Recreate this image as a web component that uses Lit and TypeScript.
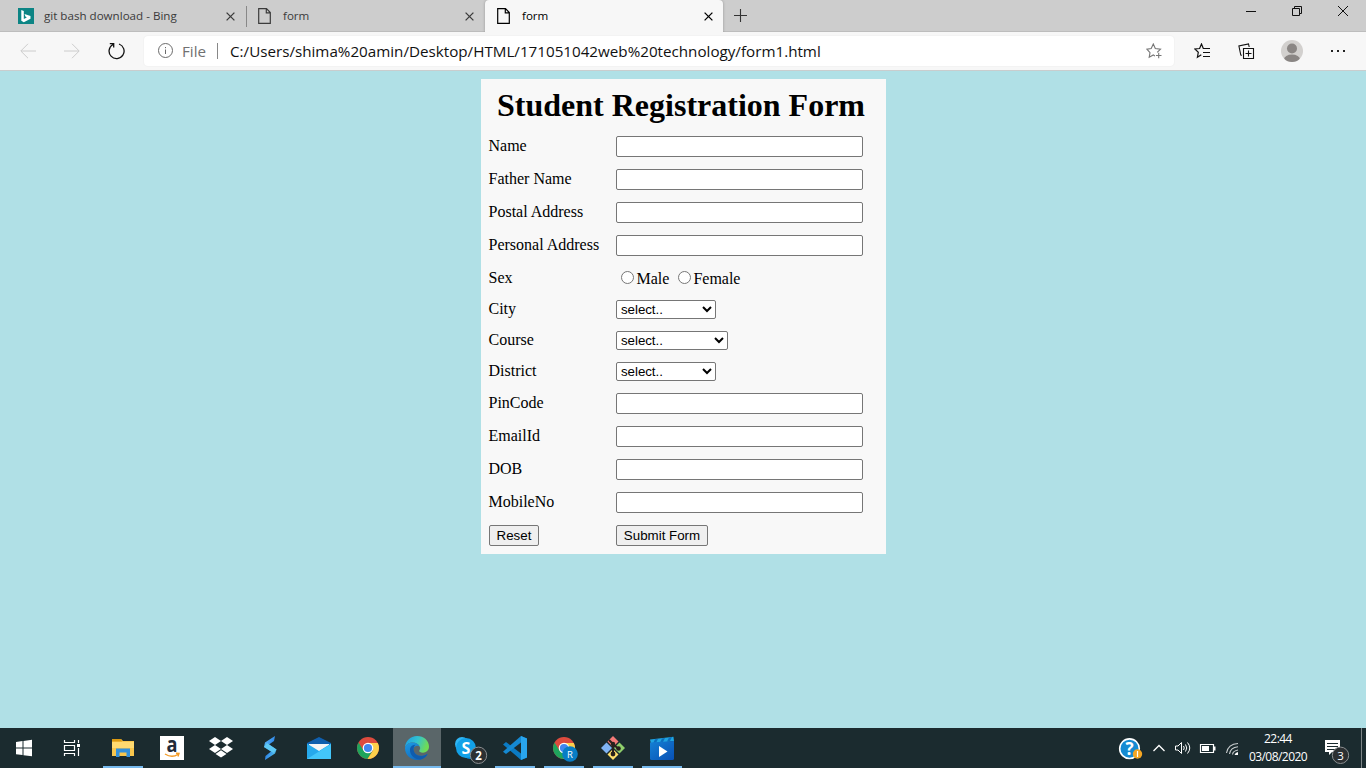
import { LitElement, html, svg, css } from "lit";
import { customElement, property } from "lit/decorators.js";

const closeIcon = html`<svg width="9" height="9" viewBox="0 0 9 9"><path d="M.6.6 8.4 8.4M8.4.6.6 8.4" stroke="currentColor" stroke-width="1.3" fill="none"/></svg>`;
const fileIcon = html`<svg width="14" height="16" viewBox="0 0 14 16"><path d="M.7.7H8.5L12.3 4.500V15.3H.7ZM8.3.8V4.800H12.3" stroke="currentColor" stroke-width="1.2" fill="none"/></svg>`;
const bingIcon = html`<svg width="16" height="16"><rect width="16" height="16" fill="#0c8484"/><path d="M3.300 2 5.800 2.900V11L8.800 9.400 7.400 8.600 6.500 5.900 12.500 8V10.700L5.800 14.200 3.300 12.800Z" fill="#fff"/></svg>`;

@customElement("browser-tabs")
class BrowserTabs extends LitElement {
  static styles = css`
    :host { display: flex; height: 32px; box-sizing: border-box; background: #cdcdcd; box-shadow: inset 0 -1px #bdbdbd; font: 11.6px "Open Sans", sans-serif; color: #3b3b3b; }
    .tab { display: flex; align-items: center; box-sizing: border-box; height: 32px; }
    .first { width: 246px; padding-left: 18px; padding-right: 11px; }
    .second { width: 238px; padding: 0 11px; }
    .active { width: 238px; padding: 0 10px 0 12px; background: #f7f7f7; border-radius: 4px 4px 0 0; color: #000; box-shadow: 0 0 3px #0004; clip-path: inset(0 -4px 0 -4px); }
    .title { flex: 1; padding: 0 0 2px 11px; white-space: pre; }
    .first .title { padding-left: 10px; }
    .sep { width: 1px; height: 21px; background: #888; margin-top: 6px; }
    .plus { margin: 9px 0 0 11px; color: #333; }
    .controls { margin-left: auto; display: flex; gap: 36px; padding: 6px 18px 0 0; color: #111; }
    svg { display: block; flex: none; }
  `;
  render() {
    return html`
      <div class="tab first">${bingIcon}<span class="title">git bash download - Bing</span>${closeIcon}</div>
      <div class="sep"></div>
      <div class="tab second">${fileIcon}<span class="title">form</span>${closeIcon}</div>
      <div class="tab active">${fileIcon}<span class="title">form</span>${closeIcon}</div>
      <svg class="plus" width="13" height="13"><path d="M0 6.500H13M6.500 0V13" stroke="currentColor" stroke-width="1.100"/></svg>
      <div class="controls">
        <svg width="10" height="11"><path d="M0 5.500H10" stroke="currentColor"/></svg>
        <svg width="10" height="10"><path d="M.5 2.500H7.500V9.500H.5ZM2.500 2.500V.5H9.500V7.500H7.500" stroke="currentColor" fill="none"/></svg>
        <svg width="10" height="10"><path d="M0 0 10 10M10 0 0 10" stroke="currentColor"/></svg>
      </div>`;
  }
}

@customElement("address-bar")
class AddressBar extends LitElement {
  static styles = css`
    :host { display: flex; align-items: center; box-sizing: border-box; height: 39px; background: #f7f7f7; border-bottom: 1px solid #c9cdce; padding-left: 20px; font: 15.2px "Open Sans", sans-serif; }
    svg { display: block; flex: none; }
    .nav { display: flex; gap: 28px; align-items: center; width: 124px; color: #ccc; }
    .box { display: flex; align-items: center; box-sizing: border-box; width: 1030px; height: 30px; background: #fff; border-radius: 4px; padding: 0 12px 0 14px; box-shadow: 0 0 2px #0001; }
    .file { color: #717171; width: 35px; padding-left: 8px; white-space: pre; }
    .line { width: 1px; height: 16px; background: #888; margin-right: 12px; }
    .url { flex: 1; color: #111; white-space: pre; }
    .tools { display: flex; align-items: center; padding-left: 20px; color: #111; }
    .tools svg + svg { margin-left: 26.5px; }
  `;
  render() {
    return html`
      <div class="nav">
        <svg width="16" height="16"><path d="M16 8H1M8 .8.8 8 8 15.200" stroke="currentColor" fill="none"/></svg>
        <svg width="16" height="16"><path d="M0 8H15M8 .8 15.200 8 8 15.200" stroke="currentColor" fill="none"/></svg>
        <svg width="18" height="18"><path d="M11 2A7.500 7.500 0 1 1 5 2.500M1.800 1.600H5.700V5.500" stroke="#111" stroke-width="1.300" fill="none"/></svg>
      </div>
      <div class="box">
        <svg width="16" height="16"><circle cx="7.500" cy="7.500" r="7" stroke="#6b6b6b" fill="none"/><path d="M7.500 6.500V11M7.500 4V5.200" stroke="#6b6b6b"/></svg>
        <span class="file">File</span><span class="line"></span>
        <span class="url">C:/Users/shima%20amin/Desktop/HTML/171051042web%20technology/form1.html</span>
        <svg width="16" height="16"><path d="M11.200 9.300 14.500 6.200 9.300 5.500 7.300 1 5.200 5.500.9 6.200 4 9.700 3.200 14.300 7.300 12 9 12.900M10 12.500H15.500M12.700 9.800V15.300" stroke="#777" stroke-width="1.100" fill="none"/></svg>
      </div>
      <div class="tools">
        <svg width="17" height="16"><path d="M9.300 5.500 7.500 1 5.600 5.500.8 6 4.300 9.300 3.400 14.300 7.300 11.800M9 5.500H16M9 9.500H16M9 13.500H16" stroke="currentColor" stroke-width="1.200" fill="none"/></svg>
        <svg width="17" height="16"><path d="M5.500 5.500H15.500V15.500H5.500ZM10.500 7.500V13.500M7.500 10.500H13.500M4 12.300 2.800 12 .9 3 10.500.9 11.200 4" stroke="currentColor" stroke-width="1.100" fill="none"/></svg>
        <svg width="22" height="22"><defs><clipPath id="av"><circle cx="11" cy="11" r="11"/></clipPath></defs><circle cx="11" cy="11" r="11" fill="#d2d0ce"/><g fill="#8a8684" clip-path="url(#av)"><circle cx="11" cy="8.500" r="5"/><ellipse cx="11" cy="19.500" rx="8" ry="5"/></g></svg>
        <svg width="16" height="4"><path d="M1 1H3V3H1ZM7 1H9V3H7ZM13 1H15V3H13Z" fill="#222"/></svg>
      </div>`;
  }
}

const textRow = (label: string) => html`<div class="row"><label>${label}</label><input type="text"></div>`;
const selectRow = (label: string, cls: string) => html`<div class="row short"><label>${label}</label><select class=${cls}><option>select..</option></select></div>`;

@customElement("student-form")
class StudentForm extends LitElement {
  static styles = css`
    :host { display: block; box-sizing: border-box; width: 405px; height: 475px; margin: 8px 0 0 481px; background: #f8f8f8; font: 16px "Liberation Serif", serif; color: #000; }
    h1 { margin: 0; height: 51px; padding: 8px 5px 0 0; box-sizing: border-box; font-size: 32px; line-height: 37px; text-align: center; white-space: pre; }
    .row { display: flex; align-items: center; height: 33px; padding-left: 7.5px; }
    .short { height: 31px; }
    .sex { height: 32px; }
    label { width: 127.5px; line-height: 18px; padding-bottom: 1px; white-space: pre; }
    input[type="text"] { box-sizing: border-box; width: 247px; height: 21px; margin: 0; border: 1px solid #767676; border-radius: 2px; background: #fff; }
    select { box-sizing: border-box; height: 19px; margin: 0; border: 1px solid #767676; border-radius: 2px; background-color: #fff; color: #000; font: 13.333px "Liberation Sans", sans-serif; padding: 0; letter-spacing: -0.05px; }
    .narrow { width: 100px; }
    .wide { width: 112px; }
    input[type="radio"] { width: 13px; height: 13px; margin: 0 2.5px 2px 5px; }
    .choice { display: flex; align-items: center; line-height: 18px; }
    .choice span { padding-top: 2px; }
    .choice + .choice { margin-left: 3.5px; }
    button { box-sizing: border-box; height: 21px; margin: 0; padding: 0; border: 1px solid #767676; border-radius: 2px; background: #efefef; color: #000; font: 13.333px "Liberation Sans", sans-serif; }
    .reset { width: 50px; margin: 0 77px 0 0.5px; }
    .submit { width: 92px; }
  `;
  render() {
    return html`
      <h1>Student Registration Form</h1>
      ${["Name", "Father Name", "Postal Address", "Personal Address"].map(textRow)}
      <div class="row sex"><label>Sex</label>
        <div class="choice"><input type="radio" name="sex"><span>Male</span></div>
        <div class="choice"><input type="radio" name="sex"><span>Female</span></div>
      </div>
      ${selectRow("City", "narrow")}${selectRow("Course", "wide")}${selectRow("District", "narrow")}
      ${["PinCode", "EmailId", "DOB", "MobileNo"].map(textRow)}
      <div class="row"><button class="reset">Reset</button><button class="submit">Submit Form</button></div>`;
  }
}

const chromeMark = svg`
  <circle cx="25" cy="20" r="11" fill="#dd4b3e"/>
  <path d="M15.500 14.500A11 11 0 0 0 24.500 31L29.800 22.500 25 20 20.500 22.500Z" fill="#1fa45c"/>
  <path d="M25 15H34.800A11 11 0 0 1 24.500 31L30 22.500Z" fill="#fdd04b"/>
  <circle cx="25" cy="20" r="5.300" fill="#fff"/><circle cx="25" cy="20" r="4.100" fill="#4287f0"/>`;

const apps = [
  { state: "open", art: svg`<path d="M14 11H23L25 13H36V28H14Z" fill="#f9c74d"/><path d="M14 11H23L24 13.500H14Z" fill="#dc9a12"/><path d="M14 14H36V20H14Z" fill="#ffda70"/><path d="M18 29V20.500H32V29H28.500V24.500H21.500V29Z" fill="#3491db"/>` },
  { state: "", art: svg`<rect x="13" y="8" width="24" height="24" fill="#fff"/><text x="25" y="23.500" class="b" font-size="22" fill="#222b38" text-anchor="middle" textLength="11" lengthAdjust="spacingAndGlyphs">a</text><path d="M18 26Q25 30.500 31 26.300M29 25.200 32 25.300 31 28.500" stroke="#f39a24" stroke-width="1.400" fill="none"/>` },
  { state: "", art: svg`<path d="M19 9 25 13 19 17 13 13ZM31 9 37 13 31 17 25 13ZM19 17 25 21 19 25 13 21ZM31 17 37 21 31 25 25 21ZM25 22.300 30.500 26 25 29.600 19.500 26Z" fill="#fff"/>` },
  { state: "", art: svg`<defs><linearGradient id="s" x2="1" y2="1"><stop stop-color="#6cc6ff"/><stop offset=".5" stop-color="#2f87e8"/><stop offset="1" stop-color="#65dff0"/></linearGradient></defs><path d="M30 8 20 14.500 19 19 26 23.500 20.500 28 20 32 30 25.500 31.500 21.500 24 16.500 29 13Z" fill="url(#s)"/><path d="M19 19 22 15 31.500 21.500 28.500 25Z" fill="#5ec9f4"/>` },
  { state: "", art: svg`<path d="M13 15 25 9 37 15V20H13Z" fill="#0f5fae"/><path d="M15 16H35V24H15Z" fill="#f4f5f6"/><path d="M13 15.500 25 23 37 15.500V31H13Z" fill="#26a9ec"/><path d="M13 31 37 16V31Z" fill="#43c6fa"/>` },
  { state: "", art: chromeMark },
  { state: "open current", art: svg`<defs><linearGradient id="e1" x2="1" y2=".3"><stop stop-color="#1b9be6"/><stop offset=".55" stop-color="#33c3cf"/><stop offset="1" stop-color="#6fdc55"/></linearGradient><linearGradient id="e2" x2=".6" y2="1"><stop stop-color="#1c9be4"/><stop offset="1" stop-color="#1268bb"/></linearGradient></defs>
    <path d="M13 20C13 13 18.500 8 25 8 32 8 37 12.800 37 18.500 37 22.500 34 24.700 31 24.700 28.500 24.700 26.800 23.800 27.300 22.500 28.200 21.300 28.300 20.500 28 19.300 27 16.500 24 14.500 20.500 14.500 16.500 14.500 13.500 17 13 20Z" fill="url(#e1)"/>
    <path d="M13 20C13.500 17 16.500 14.500 20.500 14.500 24 14.500 26.500 16.300 27.500 18.300 25.500 17 22.500 17.500 21.500 20.500 20.500 25 25 29 31.500 27.500 33.500 27 35.500 25.500 35.800 26 33.500 30 29.500 32 25 32 18.300 32 13 26.800 13 20Z" fill="url(#e2)"/>
    <path d="M18 21C18.500 18 21 16.800 23.500 16.800 20.500 19.500 21 24.500 25 27 28.500 28.800 32 28 35.500 25.700 34.500 28.500 31.500 30.800 28.500 31.500 22.500 31.500 17.500 27 18 21Z" fill="#0f5cae"/>` },
  { state: "", art: svg`<circle cx="21" cy="16" r="7" fill="#30b6f5"/><circle cx="29" cy="24" r="7" fill="#078bd8"/><circle cx="25" cy="20" r="10" fill="#12a1e8"/><text x="25" y="25.700" class="b" font-size="16" fill="#fff" text-anchor="middle">S</text><circle cx="37.500" cy="27.300" r="8.200" fill="#2c3032" stroke="#8b8f91"/><text x="37.500" y="31.500" class="b" font-size="11.500" fill="#fff" text-anchor="middle">2</text>` },
  { state: "open", art: svg`<path d="M31 8 37 10.500V29.500L31 32 13 16.500 16 14 31 25.500Z" fill="#0b7bc4"/><path d="M31 8 13 23.700 16 26 31 14.500Z" fill="#1589d2"/><path d="M31 8 37 10.500V29.500L31 32Z" fill="#29a5ee"/>` },
  { state: "open", art: svg`${chromeMark}<circle cx="31" cy="26" r="7.800" fill="#087dc5"/><text x="31" y="29.700" font-size="9.500" fill="#fff" text-anchor="middle">R</text>` },
  { state: "open", art: svg`<path d="M25 8 30.500 13.500 25 19 19.500 13.500Z" fill="#f47a78"/><path d="M18.500 14.500 24 20 18.500 25.500 13 20Z" fill="#80b4f5"/><path d="M31.500 14.500 37 20 31.500 25.500 26 20Z" fill="#8fd06c"/><path d="M25 21 30.500 26.500 25 32 19.500 26.500Z" fill="#ffe06b"/><path d="M21 12 25 16V26M25 16 30 20.500" stroke="#28211d" stroke-width="2" fill="none"/><circle cx="25" cy="16" r="2.200" fill="#28211d"/><circle cx="25" cy="26" r="2.400" fill="#28211d"/><circle cx="30.500" cy="20.500" r="2.300" fill="#28211d"/>` },
  { state: "open", art: svg`<defs><linearGradient id="m" x2="1" y2="1"><stop stop-color="#1581d4"/><stop offset="1" stop-color="#0850b5"/></linearGradient></defs><path d="M13 11.500 36.500 8.800 37 13 14 16Z" fill="#1fa4e2"/><path d="M18 11.300 21 11 19 15 16 15.500ZM25 10.400 28 10 26 14 23 14.500ZM32 9.400 35 9 33 13 30 13.500Z" fill="#0d6fbe"/><path d="M13 14.500 37 13V30.500Q37 32 35.500 32H14.500Q13 32 13 30.500Z" fill="url(#m)"/><path d="M22 18V29L30.500 23.500Z" fill="#fff"/>` },
];

@customElement("task-bar")
class TaskBar extends LitElement {
  @property({ type: String }) time = "22:44";
  static styles = css`
    :host { display: flex; height: 40px; background: #1b2b2f; font-family: "Open Sans", sans-serif; color: #fff; }
    svg { display: block; flex: none; }
    .b { font-weight: 700; }
    .app { box-sizing: border-box; width: 49px; height: 40px; display: grid; }
    .app > svg { grid-area: 1 / 1; }
    .open::after { content: ""; grid-area: 1 / 1; align-self: end; width: 40px; height: 2px; margin-left: 5px; background: #76b9ed; }
    .current { background: linear-gradient(90deg, transparent 1px, #5a6669 1px); }
    .current::after { width: 48px; margin-left: 1px; }
    .tray { display: flex; margin-left: auto; }
    .clock { width: 68px; text-align: center; font-size: 12px; line-height: 18px; padding-top: 2px; box-sizing: border-box; white-space: pre; letter-spacing: -0.55px; }
    .desk { width: 4px; border-left: 1px solid #7d8587; }
  `;
  render() {
    return html`
      <svg width="48" height="40"><path d="M16 14 22.500 13V19.500H16ZM23.500 12.900 32 11.800V19.500H23.500ZM16 20.500H22.500V27L16 26.200ZM23.500 20.500H32V28.200L23.500 27.200Z" fill="#fff"/></svg>
      <svg width="50" height="40"><path d="M16.500 12V14.500H26.500V12M16.500 17.500H26.500V22.500H16.500ZM16.500 28V25.500H26.500V28M30.500 12V15M30.500 20V28" stroke="#fff" stroke-width="1.200" fill="none"/><rect x="29" y="16" width="3" height="3" fill="#fff"/></svg>
      ${apps.map((a) => html`<div class="app ${a.state}"><svg width="49" height="40">${a.art}</svg></div>`)}
      <div class="tray">
        <svg width="30" height="40"><circle cx="12.500" cy="20.700" r="9.800" fill="#168bd2" stroke="#fff" stroke-width="1.600"/><text x="12.500" y="27" class="b" font-size="17" fill="#fff" text-anchor="middle">?</text><circle cx="20.500" cy="26" r="4.700" fill="#f5a623"/><path d="M20.500 23V29" stroke="#fff" stroke-width="1.200"/></svg>
        <svg width="24" height="40"><path d="M6.500 23 12 17.500 17.500 23" stroke="#fff" stroke-width="1.300" fill="none"/></svg>
        <svg width="24" height="40"><path d="M4.500 18H7L10.500 14.500V25.500L7 22H4.500ZM12.500 18Q14 20 12.500 22M14.500 16.500Q17 20 14.500 23.500M16.500 14.500Q21 20 16.500 25.500" stroke="#fff" fill="none"/></svg>
        <svg width="24" height="40"><path d="M5.500 16.500H18.500V24.500H5.500Z" stroke="#fff" stroke-width="1.200" fill="none"/><path d="M7 18H14V23H7ZM19 18.500H20.500V22.500H19Z" fill="#fff"/></svg>
        <svg width="25" height="40"><path d="M7.500 25Q9 16 19 15.500M10.500 26Q11.500 19.500 19 18.800M13.500 26.500Q14 22.800 19 22" stroke="#c9cecf" stroke-width="1.100" fill="none"/><path d="M15.500 27A4 4 0 0 1 19 24V27Z" fill="#fff"/></svg>
        <div class="clock">${this.time}<br>03/08/2020</div>
        <svg width="49" height="40"><path d="M13 12H28V24H20L17 27V24H13Z" fill="#fff"/><path d="M15 15.500H26M15 18.500H26M15 21.500H26" stroke="#1b2b2f"/><circle cx="28.500" cy="27.300" r="8.200" fill="#2c3032" stroke="#8b8f91"/><text x="28.500" y="31.500" font-size="11.500" fill="#fff" text-anchor="middle">3</text></svg>
        <div class="desk"></div>
      </div>`;
  }
}

@customElement("app-root")
class AppRoot extends LitElement {
  static styles = css`
    :host { display: flex; flex-direction: column; width: 1366px; height: 768px; overflow: hidden; background: #b0e0e6; }
    main { flex: 1; min-height: 0; }
    main::before { content: ""; display: table; }
  `;
  render() {
    return html`<browser-tabs></browser-tabs><address-bar></address-bar><main><student-form></student-form></main><task-bar></task-bar>`;
  }
}
